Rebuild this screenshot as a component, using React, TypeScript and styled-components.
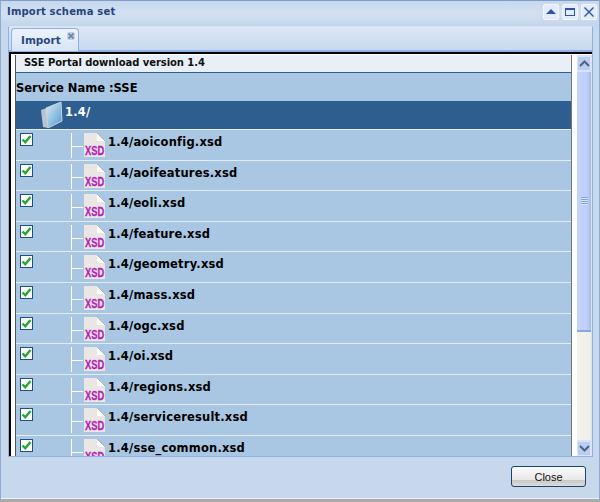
import styled, { createGlobalStyle } from "styled-components";

const files = [
  "aoiconfig",
  "aoifeatures",
  "eoli",
  "feature",
  "geometry",
  "mass",
  "ogc",
  "oi",
  "regions",
  "serviceresult",
  "sse_common",
];

export default function App() {
  return (
    <Window>
      <GlobalStyle />
      <Header>
        <Title>Import schema set</Title>
        <Tools>
          <ToolButton>
            <svg width="12" height="12" viewBox="0 0 12 12">
              <path d="M6 3 L11 8 H1 Z" fill="#2d55a5" />
            </svg>
          </ToolButton>
          <ToolButton>
            <svg width="12" height="12" viewBox="0 0 12 12">
              <rect x="1.5" y="2.5" width="9" height="7" fill="none" stroke="#2d55a5" />
              <rect x="1" y="2" width="10" height="2" fill="#2d55a5" />
            </svg>
          </ToolButton>
          <ToolButton>
            <svg width="12" height="12" viewBox="0 0 12 12">
              <path d="M1.5 1.5 L10.5 10.5 M10.5 1.5 L1.5 10.5" stroke="#2d55a5" strokeWidth="1.4" />
            </svg>
          </ToolButton>
        </Tools>
      </Header>

      <TabPanel>
        <TabStrip>
          <Tab>
            Import
            <TabClose>
              <svg width="8" height="8" viewBox="0 0 8 8">
                <path d="M1.5 1.5 L6.5 6.5 M6.5 1.5 L1.5 6.5" stroke="#7288ad" strokeWidth="1.8" />
              </svg>
            </TabClose>
          </Tab>
        </TabStrip>

        <Content>
          <Scroller>
            <Caption>SSE Portal download version 1.4</Caption>
            <ServiceName>Service Name :SSE</ServiceName>
            <RootRow>
              <FolderIcon />
              <RootLabel>1.4/</RootLabel>
            </RootRow>
            {files.map((name) => (
              <FileRow key={name}>
                <Check>
                  <svg width="11" height="11" viewBox="0 0 11 11">
                    <path d="M1.5 5.5 L4.3 8.3 L9.5 2" fill="none" stroke="#22a82a" strokeWidth="2.4" />
                  </svg>
                </Check>
                <Branch />
                <XsdIcon />
                <FileName>1.4/{name}.xsd</FileName>
              </FileRow>
            ))}
          </Scroller>
          <ScrollBar>
            <ScrollButton>
              <svg width="11" height="7" viewBox="0 0 11 7">
                <path d="M1 6 L5.5 1.5 L10 6" fill="none" stroke="#4d6485" strokeWidth="2" />
              </svg>
            </ScrollButton>
            <ScrollTrack>
              <ScrollThumb>
                <Grip />
              </ScrollThumb>
            </ScrollTrack>
            <ScrollButton>
              <svg width="11" height="7" viewBox="0 0 11 7">
                <path d="M1 1 L5.5 5.5 L10 1" fill="none" stroke="#4d6485" strokeWidth="2" />
              </svg>
            </ScrollButton>
          </ScrollBar>
        </Content>
      </TabPanel>

      <Footer>
        <CloseButton>Close</CloseButton>
      </Footer>
    </Window>
  );
}

function FolderIcon() {
  return (
    <FolderSvg width="22" height="27" viewBox="0 0 22 27">
      <defs>
        <linearGradient id="folderFill" x1="0" y1="0" x2="1" y2="1">
          <stop offset="0" stopColor="#dcebf6" />
          <stop offset="1" stopColor="#4f9ad0" />
        </linearGradient>
      </defs>
      <path d="M0 9 L2 26 L7 27 L6 7 Z" fill="#b9c4cc" />
      <path d="M5 7 L20 1 L21 20 L7 27 Z" fill="url(#folderFill)" stroke="#c9d3da" />
    </FolderSvg>
  );
}

function XsdIcon() {
  return (
    <XsdSvg width="23" height="27" viewBox="0 0 23 27">
      <path d="M1 0 H14 L22 8 V24 H1 Z" fill="#e9e6e4" />
      <path d="M14 0 L22 8 H14 Z" fill="#ffffff" />
      <path d="M14 0 L22 8" stroke="#b7b4b2" fill="none" />
      <XsdText transform="translate(2 22) scale(0.72 1)">XSD</XsdText>
    </XsdSvg>
  );
}

const GlobalStyle = createGlobalStyle`
  html, body {
    margin: 0;
    padding: 0;
    background: #c6d7ec;
  }
`;

const Window = styled.div`
  width: 600px;
  height: 502px;
  box-sizing: border-box;
  display: flex;
  flex-direction: column;
  overflow: hidden;
  background: #c8d8ec;
  border-top: 1px solid #7f9cc6;
  border-left: 1px solid #8fabd2;
  border-right: 1px solid #8fabd2;
  border-bottom: 3px solid #a9a9a9;
  font-family: "DejaVu Sans", Verdana, sans-serif;
`;

const Header = styled.div`
  height: 25px;
  flex: none;
  display: flex;
  align-items: center;
  justify-content: space-between;
  padding: 0 1px 4px 6px;
  box-sizing: border-box;
  background: linear-gradient(#c7d8ed, #d3e0f1 50%, #c4d5eb);
`;

const Title = styled.div`
  font-size: 10px;
  font-weight: bold;
  letter-spacing: 0.18px;
  color: #25467c;
`;

const Tools = styled.div`
  display: flex;
  gap: 3px;
  padding-right: 1px;
`;

const ToolButton = styled.div`
  width: 14px;
  height: 14px;
  display: flex;
  align-items: center;
  justify-content: center;
  background: #e3ecf8;
  border-radius: 2px;
  border: 1px solid #f4f8fd;
`;

const TabPanel = styled.div`
  flex: none;
  height: 431px;
  margin: 0 6px 0 7px;
  box-sizing: border-box;
  display: flex;
  flex-direction: column;
  background: #c8d8ec;
  border: 1px solid #8fb0e4;
  border-top: 1px solid #d7e3f4;
`;

const TabStrip = styled.div`
  height: 25px;
  flex: none;
  padding: 1px 0 0 2px;
  box-sizing: border-box;
  background: linear-gradient(#dbe6f6, #c9d9ef);
  border-bottom: 2px solid #8fb0e4;
  display: flex;
`;

const Tab = styled.div`
  width: 68px;
  height: 23px;
  box-sizing: border-box;
  padding: 0 0 1px 9px;
  display: flex;
  align-items: center;
  gap: 5px;
  background: linear-gradient(#edf3fb, #d8e5f6);
  border: 1px solid #8fb0e4;
  border-bottom: none;
  border-radius: 4px 4px 0 0;
  font-size: 10.5px;
  font-weight: bold;
  color: #2a4a80;
`;

const TabClose = styled.span`
  width: 10px;
  height: 10px;
  box-sizing: border-box;
  margin-top: -7px;
  background: #c3d2e8;
  border: 1px solid #eef3fa;
  border-radius: 3px;
  display: flex;
`;

const Content = styled.div`
  flex: 1;
  min-height: 0;
  display: flex;
  border-top: 2px solid #000;
  border-left: 2px solid #000;
  background: #fff;
  padding: 1px 0 0 4px;
`;

const Scroller = styled.div`
  width: 555px;
  flex: none;
  overflow: hidden;
  background: #a9c6e2;
  border-left: 1px solid #555;
  border-right: 1px solid #777;
  box-sizing: content-box;
`;

const Caption = styled.div`
  height: 18px;
  box-sizing: border-box;
  padding: 2px 0 0 8px;
  background: #e9eff6;
  border-bottom: 1px solid #31608f;
  font-size: 10px;
  font-weight: bold;
  letter-spacing: -0.06px;
  color: #111;
`;

const ServiceName = styled.div`
  height: 28px;
  box-sizing: border-box;
  padding-top: 8px;
  font-size: 11.5px;
  font-weight: bold;
  color: #000;
`;

const RootRow = styled.div`
  height: 28px;
  display: flex;
  background: #2e5e8f;
  padding-left: 25px;
`;

const FolderSvg = styled.svg`
  flex: none;
`;

const RootLabel = styled.span`
  font-size: 11.5px;
  font-weight: bold;
  letter-spacing: 0.25px;
  color: #fff;
  margin: 4px 0 0 2px;
`;

const FileRow = styled.div`
  height: 30.6px;
  box-sizing: border-box;
  border-top: 1px solid #e4edf6;
  display: flex;
  align-items: flex-start;
  padding: 3px 0 0 4px;
`;

const Check = styled.div`
  width: 13px;
  height: 13px;
  box-sizing: border-box;
  border: 1px solid #1d5183;
  background: #fff;
  display: flex;
  align-items: center;
  justify-content: center;
  flex: none;
`;

const Branch = styled.div`
  width: 11px;
  height: 25px;
  margin-left: 38px;
  flex: none;
  border-left: 1px solid #fff;
  background: linear-gradient(#fff, #fff) no-repeat 0 13px / 100% 1px;
`;

const XsdSvg = styled.svg`
  flex: none;
  margin-bottom: -2px;
`;

const XsdText = styled.text`
  font-family: "Liberation Sans", Arial, sans-serif;
  font-size: 13px;
  font-weight: bold;
  fill: #b41fb4;
  stroke: #b41fb4;
  stroke-width: 0.3px;
`;

const FileName = styled.span`
  margin: 2px 0 0 2px;
  font-size: 11.5px;
  font-weight: bold;
  letter-spacing: 0.2px;
  color: #000;
  white-space: nowrap;
`;

const ScrollBar = styled.div`
  flex: 1;
  display: flex;
  flex-direction: column;
  padding: 1px 1px 0 5px;
  gap: 1px;
  background: linear-gradient(to right, #fff 5px, #d8e3f4 5px);
`;

const ScrollButton = styled.div`
  height: 15px;
  flex: none;
  display: flex;
  align-items: center;
  justify-content: center;
  background: #bccdf4;
  border: 1px solid #dbe5f8;
  box-sizing: border-box;
`;

const ScrollTrack = styled.div`
  flex: 1;
  display: flex;
  flex-direction: column;
  background: linear-gradient(to right, #f4f2ec, #eeeee6);
`;

const ScrollThumb = styled.div`
  height: 260px;
  flex: none;
  display: flex;
  align-items: center;
  justify-content: center;
  background: linear-gradient(to right, #c5d4fa, #c0cffa 70%, #a6bce6);
  border-bottom: 2px solid #8aa6e0;
  box-sizing: border-box;
`;

const Grip = styled.div`
  width: 7px;
  height: 8px;
  background: repeating-linear-gradient(#7ea3ef 0 1px, #dbe6fb 1px 2px);
`;

const Footer = styled.div`
  flex: 1;
  display: flex;
  justify-content: flex-end;
  align-items: flex-start;
  padding: 9px 13px 0 0;
  border-bottom: 1px solid #eef3fa;
`;

const CloseButton = styled.div`
  width: 75px;
  height: 21px;
  box-sizing: border-box;
  border: 1px solid #17466f;
  border-radius: 3px;
  display: flex;
  align-items: center;
  justify-content: center;
  background: linear-gradient(#fbfbfb, #e7e7e7 70%, #c9c9c9 70%, #dcdcdc);
  font-family: "Liberation Sans", Arial, sans-serif;
  font-size: 11px;
  color: #111;
`;
